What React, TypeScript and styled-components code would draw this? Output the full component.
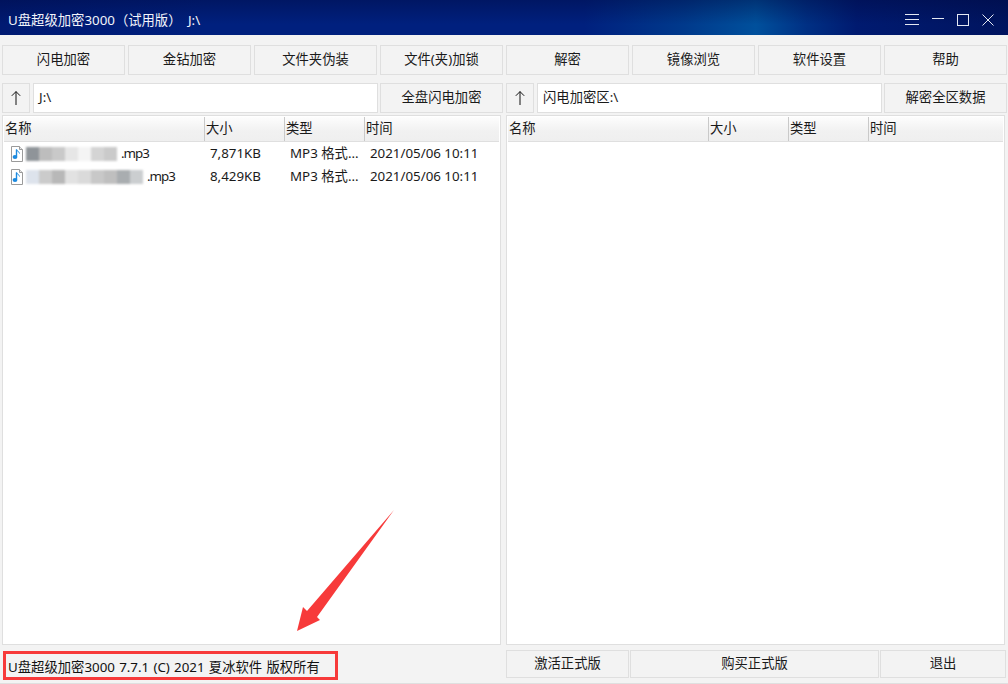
import * as React from "react";
import styled, { createGlobalStyle } from "styled-components";

const fontStack = `"Noto Sans", "Noto Sans CJK SC", sans-serif`;
const lineColor = "#dfdfdf";

const toolButtons = ["闪电加密", "金钻加密", "文件夹伪装", "文件(夹)加锁", "解密", "镜像浏览", "软件设置", "帮助"];
const columns = ["名称", "大小", "类型", "时间"];

const files = [
  { shades: ["#8f9499", "#bdbdbd", "#c9c9c9", "#e6e6e6", "#f4f4f4", "#d4d4d4", "#cacaca"], size: "7,871KB" },
  { shades: ["#dde3ec", "#cbcbcb", "#b8b8b8", "#e2e2e2", "#dadada", "#c8c8c8", "#bfbfbf", "#a9adb0", "#cbced0"], size: "8,429KB" },
];

const GlobalStyle = createGlobalStyle`
  html, body {
    margin: 0;
    padding: 0;
    background: #f3f3f3;
  }
`;

const FileIcon = () => (
  <svg width="14" height="16" viewBox="0 0 14 16">
    <path d="M1.5 .5H9.5L12.5 3.5V15.5H1.5Z" fill="#fff" stroke="#9a9a9a" />
    <path d="M9.5 .5V3.5H12.5" fill="#e8e8e8" stroke="#9a9a9a" />
    <path d="M6.5 3.5V10.5" stroke="#1c8ae0" strokeWidth="1.4" />
    <path d="M6.5 3.5C7 5.5 9.5 5.5 9.5 7.5" fill="none" stroke="#1c8ae0" />
    <ellipse cx="5" cy="11" rx="2.4" ry="2" fill="#1c8ae0" />
  </svg>
);

const UpArrow = () => (
  <svg width="10" height="14" viewBox="0 0 10 14">
    <path d="M5 .5V14M.8 4.8L5 .6L9.2 4.8" fill="none" stroke="#111" />
  </svg>
);

const App: React.FC = () => {
  return (
    <Window>
      <GlobalStyle />
      <TitleBar>
        <TitleText>U盘超级加密3000（试用版） J:\</TitleText>
        <WindowControls>
          <svg width="14" height="12" viewBox="0 0 14 12">
            <path d="M0 .5H14M0 5.5H14M0 10.5H14" stroke="#e4e8f2" />
          </svg>
          <svg width="12" height="12" viewBox="0 0 12 12">
            <path d="M0 4.5H12" stroke="#e4e8f2" />
          </svg>
          <svg width="12" height="12" viewBox="0 0 12 12">
            <rect x=".5" y=".5" width="11" height="11" fill="none" stroke="#e4e8f2" />
          </svg>
          <svg width="12" height="12" viewBox="0 0 12 12">
            <path d="M.5 .5L11.5 11.5M11.5 .5L.5 11.5" stroke="#e4e8f2" />
          </svg>
        </WindowControls>
      </TitleBar>

      <Toolbar>
        {toolButtons.map((label) => (
          <ActionButton key={label}>{label}</ActionButton>
        ))}
      </Toolbar>

      <Panes>
        <Pane>
          <PathBar>
            <UpButton><UpArrow /></UpButton>
            <PathField>J:\</PathField>
            <ActionButton>全盘闪电加密</ActionButton>
          </PathBar>
          <ListBox>
            <ListHeader>
              {columns.map((c) => (
                <HeaderCell key={c}>{c}</HeaderCell>
              ))}
            </ListHeader>
            {files.map((f) => (
              <FileRow key={f.size}>
                <NameCell>
                  <FileIcon />
                  <Mosaic>
                    {f.shades.map((s, i) => (
                      <MosaicCell key={i} $shade={s} />
                    ))}
                  </Mosaic>
                  <FileExt>.mp3</FileExt>
                </NameCell>
                <FileCell>{f.size}</FileCell>
                <FileCell>MP3 格式...</FileCell>
                <FileCell>2021/05/06 10:11</FileCell>
              </FileRow>
            ))}
          </ListBox>
        </Pane>

        <Pane>
          <PathBar>
            <UpButton><UpArrow /></UpButton>
            <PathField>闪电加密区:\</PathField>
            <ActionButton>解密全区数据</ActionButton>
          </PathBar>
          <ListBox>
            <ListHeader>
              {columns.map((c) => (
                <HeaderCell key={c}>{c}</HeaderCell>
              ))}
            </ListHeader>
          </ListBox>
        </Pane>
      </Panes>

      <Footer>
        <StatusBox>U盘超级加密3000 7.7.1 (C) 2021 夏冰软件 版权所有</StatusBox>
        <FooterButtons>
          <ActionButton>激活正式版</ActionButton>
          <ActionButton>购买正式版</ActionButton>
          <ActionButton>退出</ActionButton>
        </FooterButtons>
      </Footer>

      <ArrowMark width="110" height="130" viewBox="290 505 110 130">
        <polygon points="394,510 317,617 320,620 297,631 303,607 307,611" fill="#f73a3a" />
      </ArrowMark>
    </Window>
  );
};

export default App;

const Window = styled.div`
  position: relative;
  display: flex;
  flex-direction: column;
  width: 1008px;
  height: 684px;
  overflow: hidden;
  box-sizing: border-box;
  border-bottom: 1px solid ${lineColor};
  background: #f3f3f3;
  color: #1a1a1a;
  font-family: ${fontStack};
  font-size: 13.33px;
`;

const TitleBar = styled.header`
  display: flex;
  justify-content: space-between;
  align-items: center;
  box-sizing: border-box;
  height: 35px;
  flex: none;
  padding: 3px 14px 0 8px;
  background:
    linear-gradient(180deg, rgba(0, 8, 60, 0.4) 0%, rgba(0, 8, 60, 0) 70%),
    linear-gradient(90deg, #001a72 0%, #00207e 20%, #00207e 58%, #003a8c 68%, #00509c 75%, #003084 80%, #001a70 85%, #00145f 100%);
`;

const TitleText = styled.div`
  color: #f2f4fa;
  white-space: pre;
  word-spacing: 3px;
`;

const WindowControls = styled.div`
  display: flex;
  align-items: center;
  gap: 13px;
  margin-top: 2px;
`;

const Toolbar = styled.div`
  display: grid;
  grid-template-columns: repeat(8, 123px);
  gap: 3px;
  padding: 10px 0 0 2px;
  height: 30px;
  flex: none;
`;

const ActionButton = styled.button`
  display: flex;
  justify-content: center;
  align-items: center;
  height: 30px;
  width: 123px;
  flex: none;
  padding: 0 0 3px;
  box-sizing: border-box;
  border: 1px solid ${lineColor};
  background: #f3f3f3;
  color: #1a1a1a;
  font: inherit;
`;

const Panes = styled.div`
  display: grid;
  grid-template-columns: 501px 501px;
  gap: 3px;
  padding: 8px 0 0 2px;
  height: 562px;
  flex: none;
`;

const Pane = styled.section`
  display: flex;
  flex-direction: column;
  min-width: 0;
`;

const PathBar = styled.div`
  display: flex;
  height: 30px;
  flex: none;
`;

const UpButton = styled(ActionButton)`
  width: 28px;
  margin-right: 3px;
  padding: 0 0 1px;
`;

const PathField = styled.div`
  display: flex;
  align-items: center;
  width: 345px;
  height: 30px;
  margin-right: 2px;
  padding: 0 0 3px 5px;
  box-sizing: border-box;
  border: 1px solid ${lineColor};
  background: #fff;
`;

const ListBox = styled.div`
  flex: 1;
  margin: 2px 2px 0 0;
  padding: 1px;
  box-sizing: border-box;
  border: 1px solid ${lineColor};
  background: #fff;
`;

const ListHeader = styled.div`
  display: grid;
  grid-template-columns: 200px 80px 80px 1fr;
  height: 24px;
  border-bottom: 1px solid ${lineColor};
  background: linear-gradient(180deg, #fdfdfd 0%, #f1f1f1 60%, #efefef 100%);
`;

const HeaderCell = styled.div`
  display: flex;
  align-items: center;
  padding: 0 0 3px 1px;
  & + & {
    border-left: 1px solid #c9c9c9;
  }
`;

const FileRow = styled.div`
  display: grid;
  grid-template-columns: 200px 80px 80px 1fr;
  align-items: center;
  height: 23px;
`;

const FileCell = styled.div`
  padding: 0 0 2px 6px;
  white-space: nowrap;
`;

const NameCell = styled.div`
  display: flex;
  align-items: center;
  padding-left: 6px;
  white-space: nowrap;
`;

const Mosaic = styled.span`
  display: inline-flex;
  margin: 0 3px 0 2px;
  filter: blur(1px);
`;

const MosaicCell = styled.span<{ $shade: string }>`
  width: 13px;
  height: 14px;
  background: ${(p) => p.$shade};
`;

const FileExt = styled.span`
  margin: -2px 0 0 1px;
  letter-spacing: -1px;
`;

const Footer = styled.footer`
  display: grid;
  grid-template-columns: 501px 501px;
  gap: 3px;
  padding: 5px 0 0 2px;
`;

const StatusBox = styled.div`
  display: flex;
  align-items: center;
  box-sizing: border-box;
  width: 335px;
  height: 29px;
  margin: 1px 0 0 1px;
  padding: 1px 0 0 2px;
  border: 3px solid #f73a3a;
  color: #111;
  white-space: nowrap;
  word-spacing: 0.8px;
`;

const FooterButtons = styled.div`
  display: grid;
  grid-template-columns: 123px 249px 126px;
  gap: 1px;
  & > button {
    width: 100%;
    height: 28px;
  }
`;

const ArrowMark = styled.svg`
  position: absolute;
  left: 290px;
  top: 505px;
`;
